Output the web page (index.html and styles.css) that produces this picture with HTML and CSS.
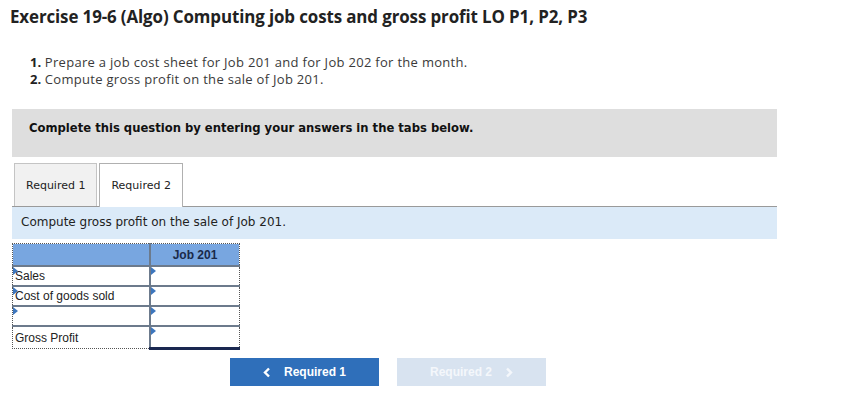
FILE: index.html
```html
<!DOCTYPE html>
<html>
<head>
<meta charset="utf-8">
<link rel="stylesheet" href="styles.css">
</head>
<body>
<div class="page">
  <h1 class="title">Exercise 19-6 (Algo) Computing job costs and gross profit LO P1, P2, P3</h1>
  <ol class="reqs">
    <li><b>1.</b> Prepare a job cost sheet for Job 201 and for Job 202 for the month.</li>
    <li><b>2.</b> Compute gross profit on the sale of Job 201.</li>
  </ol>
  <div class="banner">Complete this question by entering your answers in the tabs below.</div>
  <div class="tabs">
    <div class="tab">Required 1</div>
    <div class="tab active">Required 2</div>
  </div>
  <div class="instr">Compute gross profit on the sale of Job 201.</div>
  <table class="sheet">
    <tr class="head"><th class="lab"></th><th class="val">Job 201</th></tr>
    <tr><td class="lab"><span class="mark"></span>Sales</td><td class="val"><span class="mark"></span></td></tr>
    <tr><td class="lab"><span class="mark"></span>Cost of goods sold</td><td class="val"><span class="mark"></span></td></tr>
    <tr><td class="lab"><span class="mark"></span></td><td class="val"><span class="mark"></span></td></tr>
    <tr class="total"><td class="lab">Gross Profit</td><td class="val"><span class="mark"></span></td></tr>
  </table>
  <div class="nav">
    <button class="btn prev"><svg class="chev" width="8" height="11" viewBox="0 0 8 11"><path d="M6 1.5 L2 5.5 L6 9.5" fill="none" stroke="currentColor" stroke-width="2.4"/></svg>Required 1</button>
    <button class="btn next">Required 2<svg class="chev" width="8" height="11" viewBox="0 0 8 11"><path d="M2 1.5 L6 5.5 L2 9.5" fill="none" stroke="currentColor" stroke-width="2.4"/></svg></button>
  </div>
</div>
</body>
</html>
```

FILE: styles.css
```css
html, body {
  margin: 0;
  padding: 0;
  background: #fff;
}
.page {
  width: 765px;
  padding: 0 0 0 12px;
  font-family: "Open Sans", Arial, sans-serif;
  color: #222;
}
.title {
  margin: 0;
  padding-top: 7px;
  margin-left: -2px;
  font-family: "Open Sans", Arial, sans-serif;
  font-weight: 700;
  font-size: 16.9px;
  line-height: 20px;
  color: #222;
  letter-spacing: -0.1px;
}
.reqs {
  list-style: none;
  margin: 27px 0 0 0;
  padding: 0 0 0 18px;
  font-size: 13px;
  letter-spacing: 0.3px;
  line-height: 17px;
  font-weight: 400;
  color: #3a3a3a;
}
.reqs b {
  font-weight: 700;
  color: #222;
  letter-spacing: 0;
}
.banner {
  margin-top: 21px;
  height: 48px;
  background: #dedede;
  box-sizing: border-box;
  padding: 11px 0 0 17px;
  font-family: "DejaVu Sans", Verdana, sans-serif;
  font-weight: 700;
  font-size: 11.6px;
  line-height: 16px;
  color: #111;
}
.tabs {
  display: flex;
  gap: 2px;
  margin-top: 6px;
  padding-left: 2px;
  border-bottom: 1px solid #9a9a9a;
}
.tab {
  height: 43px;
  box-sizing: border-box;
  padding: 0 11px;
  display: flex;
  align-items: center;
  border: 1px solid #c4c4c4;
  border-bottom: none;
  background: #f1f1f1;
  font-family: "DejaVu Sans", Verdana, sans-serif;
  font-size: 11px;
  color: #222;
}
.tab.active {
  background: #fff;
  border-color: #b0b0b0;
  margin-bottom: -1px;
  height: 44px;
}
.instr {
  height: 32px;
  box-sizing: border-box;
  background: #dbeaf8;
  padding: 7px 0 0 9px;
  font-family: "DejaVu Sans", Verdana, sans-serif;
  font-size: 12px;
  line-height: 16px;
  color: #222;
}
.sheet {
  margin-top: 4px;
  border-collapse: collapse;
  border: 1px dotted #555;
  font-family: "Liberation Sans", Arial, sans-serif;
  font-size: 12px;
}
.sheet th, .sheet td {
  padding: 0;
  height: 18px;
  position: relative;
}
.sheet .lab {
  width: 134px;
  padding-left: 2px;
  text-align: left;
  border-right: 2px solid #6c7a8c;
  color: #222;
}
.sheet .val {
  width: 88px;
}
.sheet tr.head th {
  background: #78a6e0;
  height: 21px;
  font-weight: 700;
  text-align: center;
  color: #1a2a4a;
  border-bottom: 2px solid #6c7a8c;
}
.sheet td {
  border-bottom: 2px solid #6c7a8c;
  vertical-align: middle;
}
.sheet tr.total td {
  border-bottom: none;
  height: 20px;
}
.sheet tr.total td.lab {
  border-top: 1px solid #6c7a8c;
}
.sheet tr.total td.val {
  border-top: 2px solid #1a2850;
  border-bottom: 3px solid #1a2850;
}
.mark {
  position: absolute;
  left: 0;
  top: 0;
  width: 0;
  height: 0;
  border-top: 4px solid transparent;
  border-bottom: 4px solid transparent;
  border-left: 5px solid #3d76bd;
}
.nav {
  display: flex;
  gap: 18px;
  margin-top: 8px;
  padding-left: 218px;
}
.btn {
  width: 149px;
  height: 28px;
  border: none;
  padding: 0;
  font-family: "Liberation Sans", Arial, sans-serif;
  font-weight: 700;
  font-size: 12px;
  color: #fff;
  display: flex;
  align-items: center;
  justify-content: center;
}
.btn.prev {
  background: #2f6fba;
}
.btn.next {
  background: #d8e3f0;
  color: #f4f7fb;
}
.btn.prev .chev {
  margin-right: 13px;
}
.btn.next .chev {
  margin-left: 13px;
}
```
